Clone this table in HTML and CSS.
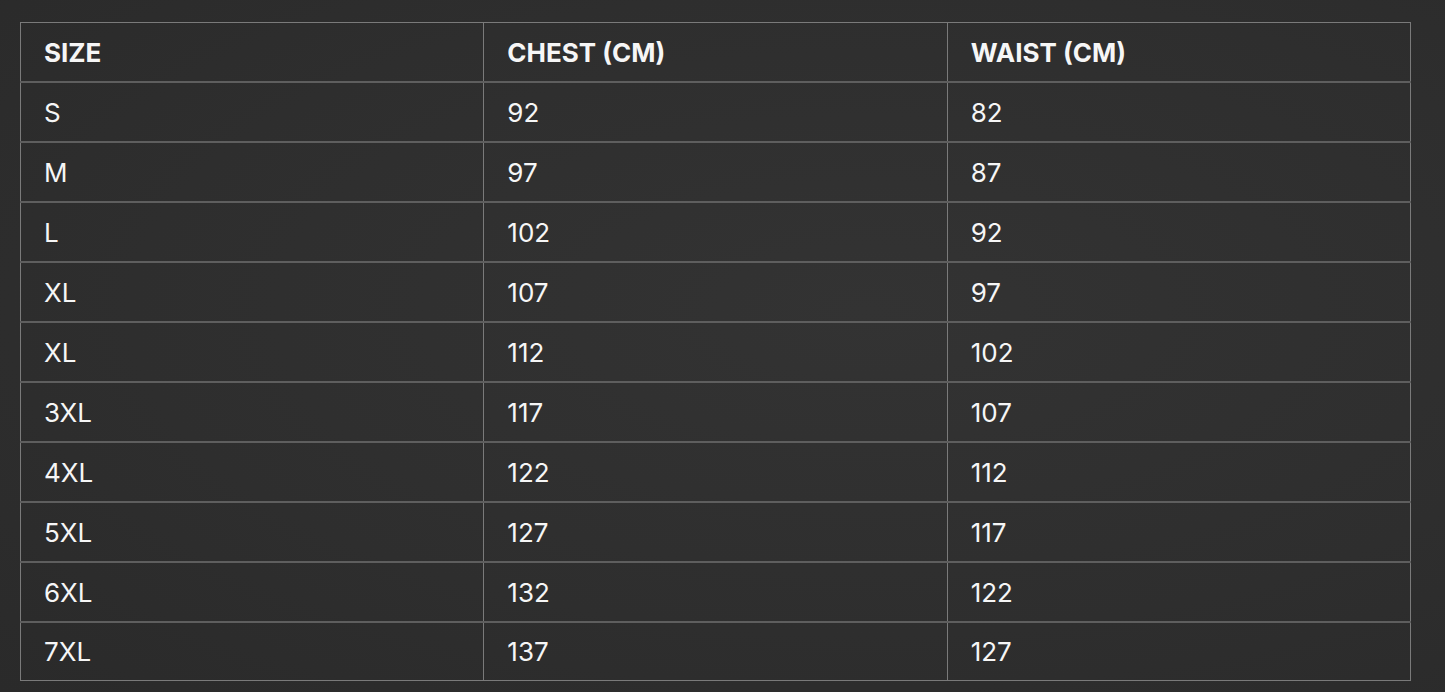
FILE: index.html
```html
<!DOCTYPE html>
<html>
<head>
<meta charset="utf-8">
<link rel="stylesheet" href="styles.css">
</head>
<body>
<div class="page">
<table class="sizes">
  <thead>
    <tr><th>SIZE</th><th>CHEST (CM)</th><th>WAIST (CM)</th></tr>
  </thead>
  <tbody>
    <tr><td>S</td><td>92</td><td>82</td></tr>
    <tr><td>M</td><td>97</td><td>87</td></tr>
    <tr><td>L</td><td>102</td><td>92</td></tr>
    <tr><td>XL</td><td>107</td><td>97</td></tr>
    <tr><td>XL</td><td>112</td><td>102</td></tr>
    <tr><td>3XL</td><td>117</td><td>107</td></tr>
    <tr><td>4XL</td><td>122</td><td>112</td></tr>
    <tr><td>5XL</td><td>127</td><td>117</td></tr>
    <tr><td>6XL</td><td>132</td><td>122</td></tr>
    <tr><td>7XL</td><td>137</td><td>127</td></tr>
  </tbody>
</table>
</div>
</body>
</html>
```
FILE: styles.css
```css
html, body {
  margin: 0;
  padding: 0;
  height: 100%;
}
body {
  background: radial-gradient(ellipse at 60% 45%, #333333 0%, #2e2e2e 60%, #2a2a2a 100%);
  font-family: Inter, "Liberation Sans", sans-serif;
  color: #f6f6f6;
}
.page {
  padding: 22px 34px 0 20px;
}
.sizes {
  width: 1391px;
  border-collapse: collapse;
  table-layout: fixed;
  border: 1px solid #7a7a7a;
}
.sizes th, .sizes td {
  height: 57px;
  padding: 1px 0 0 23px;
  line-height: 30px;
  text-align: left;
  font-size: 26px;
  border-left: 1px solid #7a7a7a;
  border-right: 1px solid #7a7a7a;
  border-bottom: 2px solid #5e5e5e;
  vertical-align: middle;
}
.sizes th {
  font-weight: 700;
}
.sizes td {
  font-weight: 400;
}
.sizes tbody tr:last-child td {
  height: 56px;
  border-bottom: 1px solid #7a7a7a;
}
```
